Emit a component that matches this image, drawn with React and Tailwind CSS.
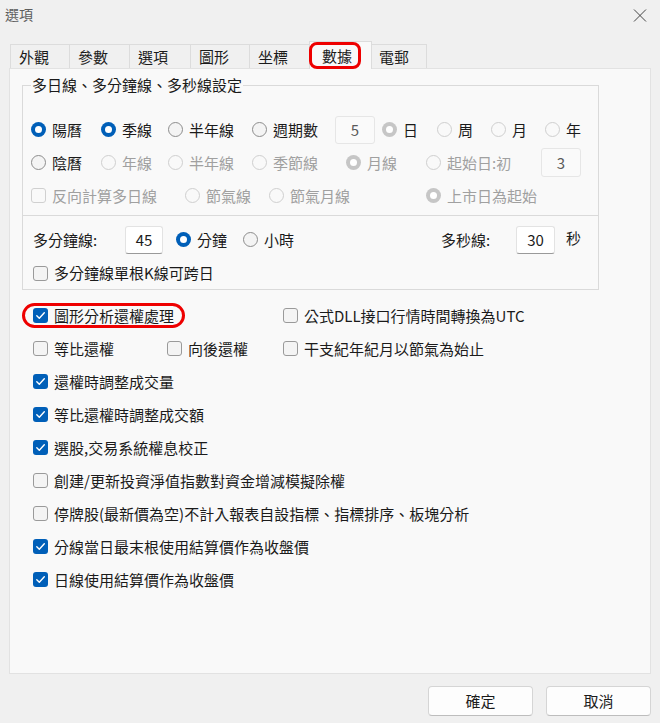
const ON = 'text-[#1b1b1b]'
const OFF = 'text-[#a0a0a0]'

function Radio({ label, checked, disabled, dim, className = '' }) {
  let dot
  if (checked && !disabled) {
    dot = (
      <span className="grid size-[15px] shrink-0 place-items-center rounded-full bg-[#005fb8]">
        <span className="size-[7px] rounded-full bg-white" />
      </span>
    )
  } else if (checked) {
    dot = (
      <span className="grid size-[15px] shrink-0 place-items-center rounded-full bg-[#c6c6c6]">
        <span className="size-[7px] rounded-full bg-white" />
      </span>
    )
  } else if (disabled) {
    dot = <span className="size-[15px] shrink-0 rounded-full border border-[#cfcfcf] bg-[#f9f9f9]" />
  } else {
    dot = <span className="size-[15px] shrink-0 rounded-full border border-[#8d8d8d] bg-[#f4f4f4]" />
  }

  return (
    <div className={`flex items-center gap-[6px] ${className}`}>
      {dot}
      <span className={dim ? OFF : ON}>{label}</span>
    </div>
  )
}

function Check({ label, checked, disabled, className = '' }) {
  return (
    <div className={`flex items-center gap-[6px] ${className}`}>
      {checked ? (
        <span className="grid size-[15px] shrink-0 place-items-center rounded-[3px] bg-[#005fb8]">
          <svg width="11" height="11" viewBox="0 0 11 11" fill="none">
            <path d="M1.8 5.8 4.3 8.2 9.3 2.8" stroke="white" strokeWidth="1.4" strokeLinecap="round" strokeLinejoin="round" />
          </svg>
        </span>
      ) : (
        <span
          className={`size-[15px] shrink-0 rounded-[3px] border ${
            disabled ? 'border-[#d0d0d0] bg-[#f9f9f9]' : 'border-[#9a9a9a] bg-[#f4f4f4]'
          }`}
        />
      )}
      <span className={disabled ? OFF : ON}>{label}</span>
    </div>
  )
}

function Field({ value, disabled, className = '' }) {
  return (
    <div
      className={`grid place-items-center rounded-[3px] border ${
        disabled
          ? 'border-[#e6e6e6] bg-[#fafafa] text-[#5a5a5a]'
          : 'border-[#e3e3e3] border-b-[#9a9a9a] bg-white text-[#1b1b1b]'
      } ${className}`}
    >
      {value}
    </div>
  )
}

export default function App() {
  const tabs = [
    { label: '外觀', w: 'w-[59px]' },
    { label: '參數', w: 'w-[60px]' },
    { label: '選項', w: 'w-[61px]' },
    { label: '圖形', w: 'w-[59px]' },
    { label: '坐標', w: 'w-[60px]' },
  ]

  return (
    <div className="flex h-[723px] w-[660px] flex-col overflow-hidden bg-[#f0f0f0] font-['Noto_Sans_CJK_TC','Noto_Sans',sans-serif] text-[15px] leading-[20px] text-[#1b1b1b]">
      {/* title bar */}
      <div className="flex h-[41px] items-start justify-between">
        <span className="pl-[5px] pt-[5px] text-[14px] leading-[18px] text-[#5e5e5e]">選項</span>
        <svg className="mr-[13px] mt-[9px]" width="14" height="13" viewBox="0 0 14 13" fill="none">
          <path d="M1 0.5 13 12.5M13 0.5 1 12.5" stroke="#444" strokeWidth="1" />
        </svg>
      </div>

      {/* tabs */}
      <div className="flex h-[27px] items-end pl-[10px]">
        {tabs.map((t) => (
          <div
            key={t.label}
            className={`flex h-[24px] items-center border border-b-0 border-r-0 border-[#dcdcdc] bg-[#f0f0f0] pl-[8px] ${t.w}`}
          >
            {t.label}
          </div>
        ))}
        <div className="relative z-10 -mb-px flex h-[28px] w-[63px] items-center border border-b-0 border-[#dcdcdc] bg-[#f9f9f9] pl-[12px]">
          數據
          <span className="absolute left-[-1px] top-0 h-[27px] w-[52px] rounded-[8px] border-[3px] border-[#ee0000]" />
        </div>
        <div className="flex h-[24px] w-[55px] items-center border border-b-0 border-l-0 border-[#dcdcdc] bg-[#f0f0f0] pl-[7px]">
          電郵
        </div>
      </div>

      {/* panel */}
      <div className="ml-[9px] h-[606px] w-[642px] border border-[#e2e2e2] bg-[#f9f9f9] px-[12px] pt-[6px]">
        <fieldset className="w-[577px] border border-[#dadada]">
          <legend className="ml-[8px] px-[1px]">多日線、多分鐘線、多秒線設定</legend>
          <div className="pb-[3px] pl-[8px] pt-[18px]">
            <div className="flex h-[33px] items-center">
              <Radio label="陽曆" checked className="w-[70px]" />
              <Radio label="季線" checked className="w-[67px]" />
              <Radio label="半年線" className="w-[84px]" />
              <Radio label="週期數" className="w-[83px]" />
              <Field value="5" disabled className="mr-[7px] h-[28px] w-[40px]" />
              <Radio label="日" checked disabled className="w-[55px]" />
              <Radio label="周" disabled className="w-[54px]" />
              <Radio label="月" disabled className="w-[54px]" />
              <Radio label="年" disabled />
            </div>
            <div className="flex h-[33px] items-center">
              <Radio label="陰曆" className="w-[70px]" />
              <Radio label="年線" disabled dim className="w-[67px]" />
              <Radio label="半年線" disabled dim className="w-[84px]" />
              <Radio label="季節線" disabled dim className="w-[94px]" />
              <Radio label="月線" checked disabled dim className="w-[80px]" />
              <Radio label="起始日:初" disabled dim className="w-[115px]" />
              <Field value="3" disabled className="h-[29px] w-[40px]" />
            </div>
            <div className="flex h-[33px] items-center">
              <Check label="反向計算多日線" disabled className="w-[154px]" />
              <Radio label="節氣線" disabled dim className="w-[84px]" />
              <Radio label="節氣月線" disabled dim className="w-[157px]" />
              <Radio label="上市日為起始" checked disabled dim />
            </div>
          </div>
        </fieldset>

        <div className="w-[577px] border border-t-0 border-[#dadada] pb-[6px] pl-[10px] pt-[9px]">
          <div className="flex h-[29px] items-center pr-[17px]">
            <span className="w-[92px]">多分鐘線:</span>
            <Field value="45" className="mr-[13px] h-[28px] w-[38px]" />
            <Radio label="分鐘" checked className="w-[67px]" />
            <Radio label="小時" />
            <span className="ml-auto w-[75px]">多秒線:</span>
            <Field value="30" className="h-[28px] w-[39px]" />
            <span className="mb-[3px] ml-[11px]">秒</span>
          </div>
          <div className="mt-[9px] flex h-[20px] items-center">
            <Check label="多分鐘線單根K線可跨日" />
          </div>
        </div>

        <div className="mt-[9px] pl-[11px]">
          <div className="flex h-[33px] items-center">
            <div className="relative w-[250px]">
              <Check label="圖形分析還權處理" checked />
              <span className="absolute left-[-11px] top-[-2.5px] h-[25px] w-[163px] rounded-[13px] border-[3px] border-[#ee0000]" />
            </div>
            <Check label="公式DLL接口行情時間轉換為UTC" />
          </div>
          <div className="flex h-[33px] items-center">
            <Check label="等比還權" className="w-[134px]" />
            <Check label="向後還權" className="w-[116px]" />
            <Check label="干支紀年紀月以節氣為始止" />
          </div>
          <div className="flex h-[33px] items-center">
            <Check label="還權時調整成交量" checked />
          </div>
          <div className="flex h-[33px] items-center">
            <Check label="等比還權時調整成交額" checked />
          </div>
          <div className="flex h-[33px] items-center">
            <Check label="選股,交易系統權息校正" checked />
          </div>
          <div className="flex h-[33px] items-center">
            <Check label="創建/更新投資淨值指數對資金增減模擬除權" />
          </div>
          <div className="flex h-[33px] items-center">
            <Check label="停牌股(最新價為空)不計入報表自設指標、指標排序、板塊分析" />
          </div>
          <div className="flex h-[33px] items-center">
            <Check label="分線當日最末根使用結算價作為收盤價" checked />
          </div>
          <div className="flex h-[33px] items-center">
            <Check label="日線使用結算價作為收盤價" checked />
          </div>
        </div>
      </div>

      {/* buttons */}
      <div className="flex justify-end gap-[13px] pr-[9px] pt-[12px]">
        <button className="h-[30px] w-[105px] rounded-[4px] border border-[#d5d5d5] border-b-[#bdbdbd] bg-[#fdfdfd]">確定</button>
        <button className="h-[30px] w-[105px] rounded-[4px] border border-[#d5d5d5] border-b-[#bdbdbd] bg-[#fdfdfd]">取消</button>
      </div>
    </div>
  )
}
